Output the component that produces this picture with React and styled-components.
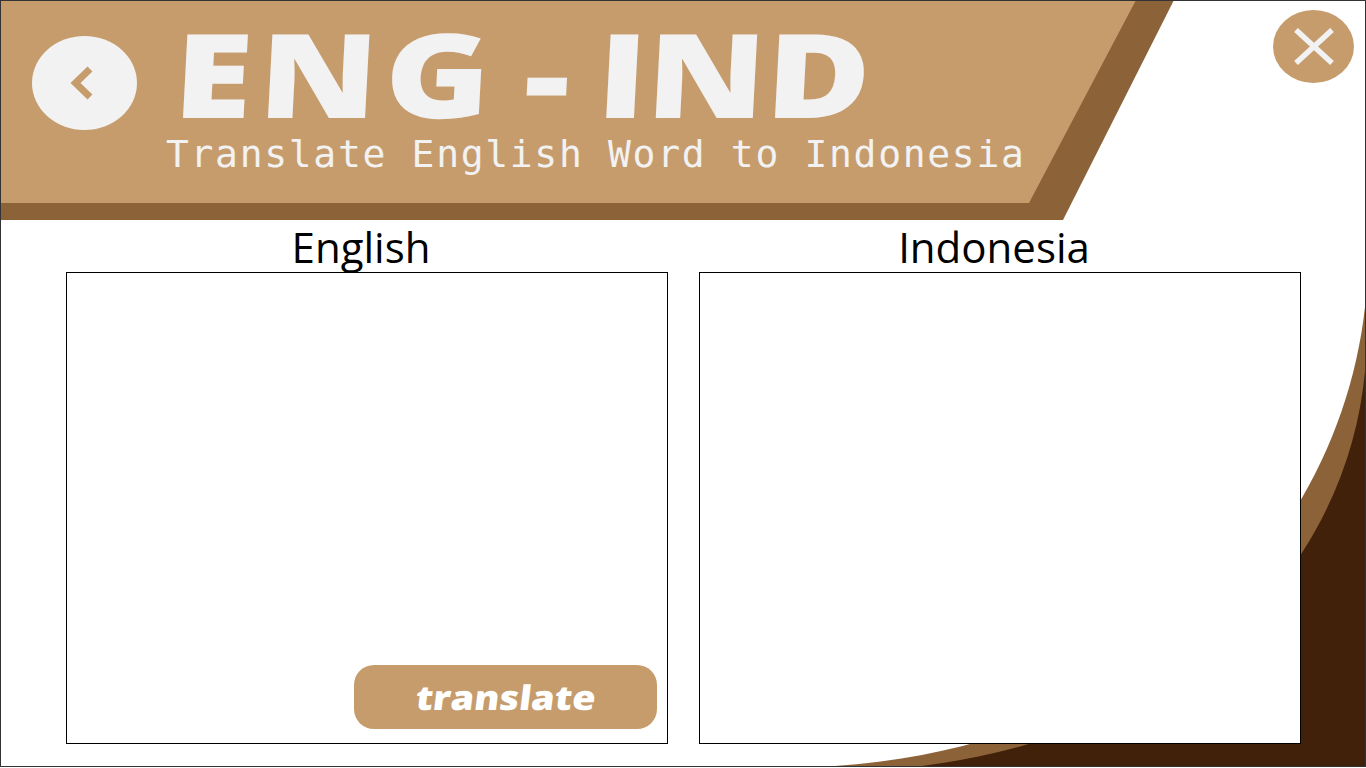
import React from 'react';
import styled, { createGlobalStyle } from 'styled-components';

const GlobalStyle = createGlobalStyle`
  html, body {
    margin: 0;
    padding: 0;
    background: #ffffff;
    overflow: hidden;
  }
`;

const Page = styled.div`
  position: relative;
  box-sizing: border-box;
  width: 1366px;
  height: 767px;
  border: 1px solid #333333;
  background: #ffffff;
  overflow: hidden;
  font-family: "Open Sans", sans-serif;
`;

const Backdrop = styled.svg`
  position: absolute;
  left: -1px;
  top: -1px;
  width: 1366px;
  height: 768px;
`;

const HeaderBand = styled.header`
  position: relative;
  height: 220px;
  margin-top: -1px;
  width: 1174px;
  margin-left: -1px;
  background: #8c6239;
  clip-path: polygon(0 0, 1174px 0, 1063px 220px, 0 220px);
`;

const HeaderFace = styled.div`
  box-sizing: border-box;
  height: 203px;
  padding: 8px 0 0 32px;
  background: #c69c6d;
  clip-path: polygon(0 0, 1136px 0, 1029px 203px, 0 203px);
  display: flex;
  align-items: flex-start;
`;

const BackButton = styled.button`
  flex: none;
  width: 105px;
  height: 94px;
  margin-top: 28px;
  padding: 0 5px 1px 0;
  border: none;
  border-radius: 50%;
  background: #f2f2f2;
  display: flex;
  align-items: center;
  justify-content: center;
`;

const TitleBlock = styled.div`
  margin-left: 29px;
`;

const Title = styled.h1`
  margin: 1px 0 -1px 5px;
  line-height: 127px;
  font-size: 117px;
  font-weight: 800;
  word-spacing: -8px;
  color: #f2f2f2;
  white-space: nowrap;
  transform: skewX(-3deg) scaleX(1.22);
  transform-origin: left bottom;
`;

const TitleWide = styled.span`
  letter-spacing: 5.5px;
`;

const Subtitle = styled.p`
  margin: 0;
  font-family: "DejaVu Sans Mono", monospace;
  font-size: 38px;
  line-height: 38px;
  letter-spacing: 1.68px;
  color: #f2f2f2;
  white-space: nowrap;
`;

const CloseButton = styled.button`
  position: absolute;
  right: 11px;
  top: 9px;
  width: 81px;
  height: 73px;
  padding: 0;
  border: none;
  border-radius: 50%;
  background: #c69c6d;
  display: flex;
  align-items: center;
  justify-content: center;
`;

const Columns = styled.main`
  position: relative;
  display: grid;
  grid-template-columns: 602px 602px;
  column-gap: 31px;
  padding: 0 0 0 65px;
`;

const Column = styled.section`
  display: flex;
  flex-direction: column;
`;

const Label = styled.h2`
  margin: 0;
  height: 52px;
  padding-right: 12px;
  line-height: 54px;
  font-size: 42px;
  font-weight: 400;
  color: #000000;
  text-align: center;
`;

const TextBox = styled.div`
  box-sizing: border-box;
  height: 472px;
  padding: 0 10px 14px 0;
  border: 1px solid #000000;
  background: #ffffff;
  display: flex;
  align-items: flex-end;
  justify-content: flex-end;
`;

const TranslateButton = styled.button`
  width: 303px;
  height: 64px;
  padding: 0;
  border: none;
  border-radius: 20px;
  background: #c69c6d;
  color: #ffffff;
  font-family: "Open Sans", sans-serif;
  font-size: 34px;
  font-weight: 800;
`;

const TranslateText = styled.span`
  display: inline-block;
  transform: skewX(-7deg) scaleX(1.11);
`;

const App = () => {
  return (
    <Page>
      <GlobalStyle />
      <Backdrop viewBox="0 0 1366 768">
        <path d="M1366 297 C1345 530 1155 745 835 766 L835 768 L1366 768 Z" fill="#8c6239" />
        <path d="M1366 358 C1355 545 1212 735 905 768 L1366 768 Z" fill="#42210b" />
      </Backdrop>
      <HeaderBand>
        <HeaderFace>
          <BackButton aria-label="back">
            <svg width="24" height="34" viewBox="0 0 24 34">
              <path d="M20 3 L5.5 17 L20 31" fill="none" stroke="#c69c6d" strokeWidth="7" />
            </svg>
          </BackButton>
          <TitleBlock>
            <Title><TitleWide>ENG</TitleWide> - IND</Title>
            <Subtitle>Translate English Word to Indonesia</Subtitle>
          </TitleBlock>
        </HeaderFace>
      </HeaderBand>
      <CloseButton aria-label="close">
        <svg width="40" height="37" viewBox="0 0 40 37">
          <path d="M2 2 L38 35 M38 2 L2 35" fill="none" stroke="#f2f2f2" strokeWidth="5.5" />
        </svg>
      </CloseButton>
      <Columns>
        <Column>
          <Label>English</Label>
          <TextBox>
            <TranslateButton>
              <TranslateText>translate</TranslateText>
            </TranslateButton>
          </TextBox>
        </Column>
        <Column>
          <Label>Indonesia</Label>
          <TextBox />
        </Column>
      </Columns>
    </Page>
  );
};

export default App;
